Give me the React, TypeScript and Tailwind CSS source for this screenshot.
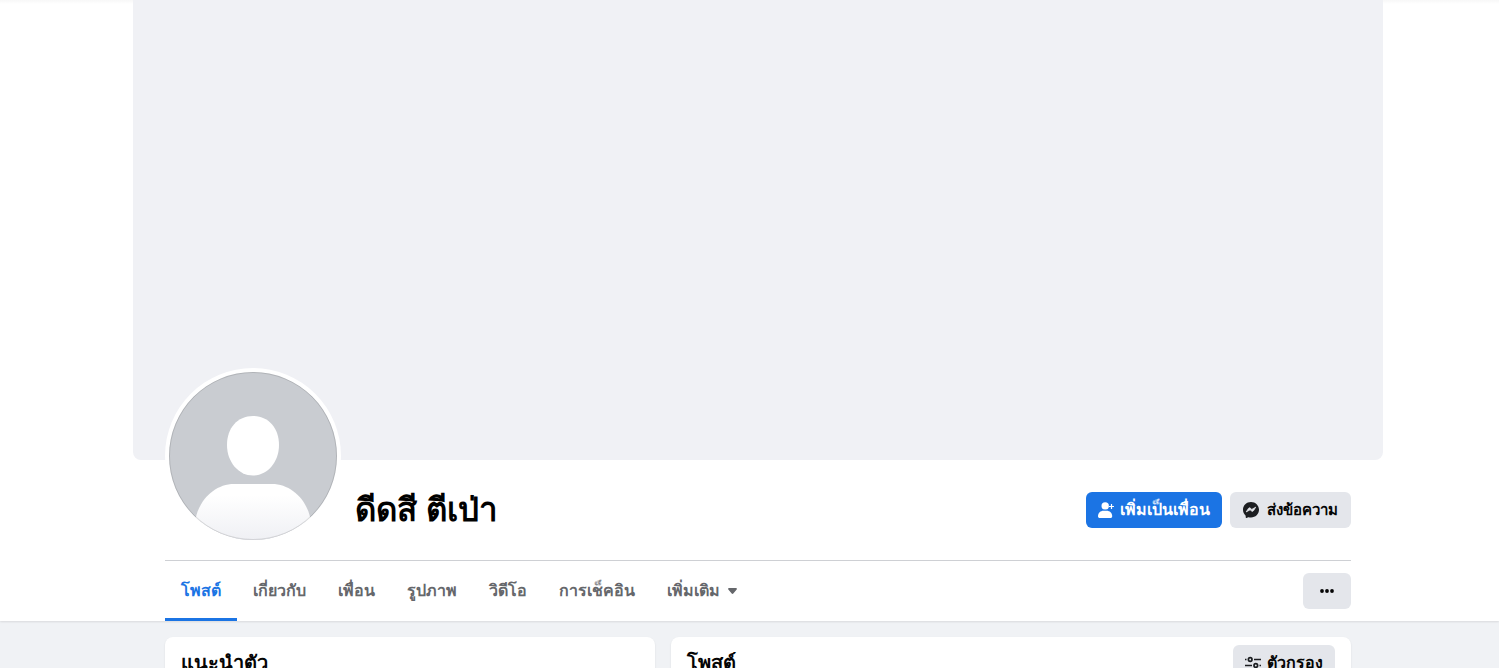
const tabs = ['โพสต์', 'เกี่ยวกับ', 'เพื่อน', 'รูปภาพ', 'วิดีโอ', 'การเช็คอิน']

const AddFriendIcon = () => (
  <svg width="16" height="16" viewBox="0 0 16 16" fill="currentColor" aria-hidden="true">
    <circle cx="7.2" cy="3.9" r="3.7" />
    <path d="M0 14.2C0 10.9 2.5 8.700 5.500 8.700h3.200c3 0 5.500 2.200 5.500 5.500 0 1.100-.7 1.800-1.800 1.800H1.800C.7 16 0 15.300 0 14.200z" />
    <path d="M13.500 2v5M11 4.500h5" stroke="currentColor" strokeWidth="1.2" />
  </svg>
)

const MessengerIcon = () => (
  <svg width="16" height="16" viewBox="0 0 16 16" aria-hidden="true">
    <path
      d="M8 0C3.5 0 0 3.3 0 7.7c0 2.3 1 4.3 2.5 5.7.1.1.2.3.2.5v1.4c0 .5.5.8.9.6l1.6-.7c.1-.1.3-.1.4 0 .8.2 1.6.3 2.4.3 4.5 0 8-3.3 8-7.7S12.500 0 8 0z"
      fill="#1c1e21"
    />
    <path
      d="M3.2 9.9 5.5 6.4c.4-.6 1.100-.7 1.700-.3l1.600 1.300 3.900-2.200-2.300 3.600c-.4.6-1.100.7-1.700.3L7.100 7.800z"
      fill="#e4e6eb"
      stroke="#e4e6eb"
      strokeWidth="0.8"
      strokeLinejoin="round"
    />
  </svg>
)

const FilterIcon = () => (
  <svg width="16" height="16" viewBox="0 0 16 16" fill="none" stroke="#1c1e21" strokeWidth="1.7" aria-hidden="true">
    <path d="M0 4.500h1.500M9 4.500h7M0 10.500h7M14.500 10.500H16" />
    <circle cx="5.2" cy="4.5" r="1.8" />
    <circle cx="10.8" cy="10.5" r="1.8" />
  </svg>
)

const Avatar = () => (
  <svg className="block w-full" viewBox="0 0 168 168" role="img" aria-label="ดีดสี ตีเป่า">
    <defs>
      <clipPath id="avatarClip">
        <circle cx="84" cy="84" r="84" />
      </clipPath>
      <linearGradient id="avatarBody" x1="0" y1="0" x2="0" y2="1">
        <stop offset="20%" stopColor="#ffffff" />
        <stop offset="100%" stopColor="#eff0f4" />
      </linearGradient>
    </defs>
    <g clipPath="url(#avatarClip)">
      <rect width="168" height="168" fill="#c9ccd1" />
      <path d="M84 44c15.500 0 26 12 26 29 0 17-11.500 30.500-26 30.500S58 90 58 73c0-17 10.500-29 26-29z" fill="#fff" />
      <path d="M26 150c3-22 20-38 39-38h38c19 0 36 16 39 38v18H26z" fill="url(#avatarBody)" />
    </g>
    <circle cx="84" cy="84" r="83.5" fill="none" stroke="#000" strokeOpacity="0.12" />
  </svg>
)

const App = () => {
  return (
    <div className="min-h-screen bg-[#f0f2f5] font-['Liberation_Sans',sans-serif] text-[#050505]">
      <header className="bg-white bg-linear-to-b from-black/3 to-transparent to-[4px] pl-[17px] shadow-[0_1px_2px_rgba(0,0,0,0.1)]">
        <div className="mx-auto max-w-[1250px]">
          <div className="h-[460px] rounded-b-lg bg-[#f0f1f5]" />

          <div className="px-8">
            <div className="flex h-[100px] items-center">
              {/* the picture hangs over the cover's lower edge */}
              <div className="-mt-27 w-44 shrink-0 rounded-full bg-white p-1">
                <Avatar />
              </div>
              <h1 className="ml-[14px] grow text-[33px] leading-10 font-bold text-black">ดีดสี ตีเป่า</h1>
              <div className="flex gap-2">
                <button type="button" className="flex h-9 items-center gap-1.5 rounded-md bg-[#1b74e4] px-3 font-semibold text-white">
                  <AddFriendIcon />
                  เพิ่มเป็นเพื่อน
                </button>
                <button type="button" className="flex h-9 items-center gap-2 rounded-md bg-[#e4e6eb] px-[13px] text-[15px] font-semibold">
                  <MessengerIcon />
                  ส่งข้อความ
                </button>
              </div>
            </div>

            <nav className="flex h-[61px] items-center justify-between border-t border-[#ced0d4]">
              <div className="flex h-full text-[#65676b]">
                {tabs.map((tab, i) => (
                  <a
                    key={tab}
                    href="#"
                    className={`flex items-center border-y-3 border-t-transparent px-4 font-semibold ${i === 0 ? 'border-b-[#1b74e4] text-[#1b74e4]' : 'border-b-transparent'}`}
                  >
                    {tab}
                  </a>
                ))}
                <button type="button" className="flex items-center gap-2 px-4 font-semibold">
                  เพิ่มเติม
                  <svg width="9" height="6" viewBox="0 0 9 6" fill="currentColor" aria-hidden="true">
                    <path d="M1 0h7c.8 0 1.2.8.7 1.4L5.3 5.5c-.4.5-1.2.5-1.6 0L.3 1.4C-.2.8.2 0 1 0z" />
                  </svg>
                </button>
              </div>
              <button type="button" aria-label="⋯" className="flex h-9 w-12 items-center justify-center rounded-md bg-[#e4e6eb]">
                <svg width="14" height="4" viewBox="0 0 14 4" fill="#050505" aria-hidden="true">
                  <circle cx="2" cy="2" r="1.9" />
                  <circle cx="7" cy="2" r="1.9" />
                  <circle cx="12" cy="2" r="1.9" />
                </svg>
              </button>
            </nav>
          </div>
        </div>
      </header>

      <main className="pl-[17px]">
        <div className="mx-auto grid max-w-[1250px] grid-cols-[49fr_68fr] items-start gap-4 px-8 pt-4">
          <section className="rounded-lg bg-white p-4 shadow-[0_1px_2px_rgba(0,0,0,0.1)]">
            <h2 className="text-xl leading-5 font-bold">แนะนำตัว</h2>
          </section>
          <section className="flex items-start justify-between rounded-lg bg-white px-4 py-2 shadow-[0_1px_2px_rgba(0,0,0,0.1)]">
            <h2 className="pt-2 text-xl leading-5 font-bold">โพสต์</h2>
            <button type="button" className="flex h-9 items-center gap-1.5 rounded-md bg-[#e4e6eb] px-3 font-semibold">
              <FilterIcon />
              ตัวกรอง
            </button>
          </section>
        </div>
      </main>
    </div>
  )
}

export default App
